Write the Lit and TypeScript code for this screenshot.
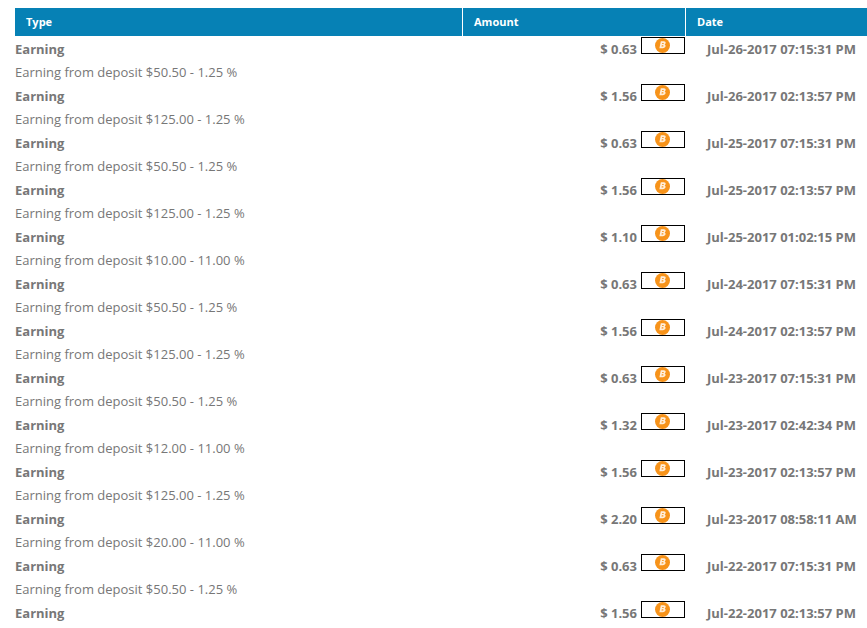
import { LitElement, html, css } from "lit";
import { customElement } from "lit/decorators.js";

const rows: [string, string, string][] = [
  ["0.63", "Jul-26-2017 07:15:31 PM", "$50.50 - 1.25 %"],
  ["1.56", "Jul-26-2017 02:13:57 PM", "$125.00 - 1.25 %"],
  ["0.63", "Jul-25-2017 07:15:31 PM", "$50.50 - 1.25 %"],
  ["1.56", "Jul-25-2017 02:13:57 PM", "$125.00 - 1.25 %"],
  ["1.10", "Jul-25-2017 01:02:15 PM", "$10.00 - 11.00 %"],
  ["0.63", "Jul-24-2017 07:15:31 PM", "$50.50 - 1.25 %"],
  ["1.56", "Jul-24-2017 02:13:57 PM", "$125.00 - 1.25 %"],
  ["0.63", "Jul-23-2017 07:15:31 PM", "$50.50 - 1.25 %"],
  ["1.32", "Jul-23-2017 02:42:34 PM", "$12.00 - 11.00 %"],
  ["1.56", "Jul-23-2017 02:13:57 PM", "$125.00 - 1.25 %"],
  ["2.20", "Jul-23-2017 08:58:11 AM", "$20.00 - 11.00 %"],
  ["0.63", "Jul-22-2017 07:15:31 PM", "$50.50 - 1.25 %"],
  ["1.56", "Jul-22-2017 02:13:57 PM", ""],
];

@customElement("app-root")
export class AppRoot extends LitElement {
  static styles = css`
    :host {
      display: block;
      height: 628px;
      overflow: hidden;
      background: #fff;
      padding: 8px 0 0 15px;
      box-sizing: border-box;
      font-family: "Open Sans", sans-serif;
      font-size: 13px;
      color: #777;
    }
    .head {
      display: grid;
      grid-template-columns: 447px 223px 1fr;
      height: 28px;
      background: #0681b5;
      color: #fff;
      font-size: 11px;
      font-weight: 700;
      line-height: 28px;
    }
    .head div { padding-left: 11px; box-sizing: border-box; }
    .head div + div { border-left: 1px solid #fff; }
    .main {
      display: grid;
      grid-template-columns: 447px 223px 1fr;
      height: 24px;
      line-height: 26px;
      font-weight: 700;
    }
    .amount { display: flex; justify-content: flex-end; gap: 4px; }
    .box {
      width: 44px;
      height: 17px;
      box-sizing: border-box;
      margin-top: 1px;
      border: 1px solid #000;
      display: flex;
      justify-content: center;
    }
    .box svg { display: block; margin-left: -1px; }
    .date { padding-left: 22px; white-space: nowrap; }
    .detail { height: 23px; line-height: 24px; }
  `;

  coin() {
    return html`<svg width="15" height="15" viewBox="0 0 15 15">
      <circle cx="7.5" cy="7.5" r="7.500" fill="#f7931a"></circle>
      <path
        d="M5.800 3.200h3c1.400 0 2.100.8 1.900 1.900-.1.600-.5 1.100-1 1.300.7.300 1 .9.900 1.700-.3 1.300-1.300 2.100-2.800 2.100H4.400L5.800 3.200zm1.200 2.800h1c.5 0 .8-.2.800-.6.100-.3-.100-.5-.5-.5h-1l-.3 1.100zM6.500 8.500h1.100c.5 0 .8-.2.900-.6.100-.4-.100-.6-.6-.6H6.800l-.3 1.200z"
        fill="#ffeeda"
        fill-rule="evenodd"
      ></path>
    </svg>`;
  }

  render() {
    return html`
      <div class="head"><div>Type</div><div>Amount</div><div>Date</div></div>
      ${rows.map(
        ([amount, date, detail]) => html`
          <div class="main">
            <div>Earning</div>
            <div class="amount"><span>$ ${amount}</span><div class="box">${this.coin()}</div></div>
            <div class="date">${date}</div>
          </div>
          ${detail ? html`<div class="detail">Earning from deposit ${detail}</div>` : ""}
        `
      )}
    `;
  }
}
